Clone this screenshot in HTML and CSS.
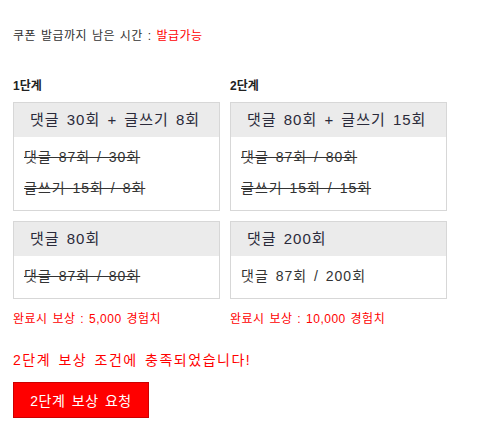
FILE: index.html
```html
<!DOCTYPE html>
<html lang="ko">
<head>
    <meta charset="UTF-8">
    <meta name="viewport" content="width=device-width, initial-scale=1.0">
    <title>쿠폰 발급</title>
    <link rel="stylesheet" href="styles.css">
</head>
<body>
    <div class="coupon">
        <p class="timer">쿠폰 발급까지 남은 시간 : <span class="red">발급가능</span></p>

        <div class="stages">
            <!-- 1단계 -->
            <div class="stage">
                <h3>1단계</h3>
                <div class="mission">
                    <div class="mission-head">댓글 30회 + 글쓰기 8회</div>
                    <div class="mission-body">
                        <p class="done">댓글 87회 / 30회</p>
                        <p class="done">글쓰기 15회 / 8회</p>
                    </div>
                </div>
                <div class="mission">
                    <div class="mission-head">댓글 80회</div>
                    <div class="mission-body">
                        <p class="done">댓글 87회 / 80회</p>
                    </div>
                </div>
                <p class="reward">완료시 보상 : 5,000 경험치</p>
            </div>

            <!-- 2단계 -->
            <div class="stage">
                <h3>2단계</h3>
                <div class="mission">
                    <div class="mission-head">댓글 80회 + 글쓰기 15회</div>
                    <div class="mission-body">
                        <p class="done">댓글 87회 / 80회</p>
                        <p class="done">글쓰기 15회 / 15회</p>
                    </div>
                </div>
                <div class="mission">
                    <div class="mission-head">댓글 200회</div>
                    <div class="mission-body">
                        <p>댓글 87회 / 200회</p>
                    </div>
                </div>
                <p class="reward">완료시 보상 : 10,000 경험치</p>
            </div>
        </div>

        <p class="notice">2단계 보상 조건에 충족되었습니다!</p>
        <button class="reward-btn">2단계 보상 요청</button>
    </div>
</body>
</html>
```

FILE: styles.css
```css
* {
    margin: 0;
    padding: 0;
    box-sizing: border-box;
}

body {
    font-family: 'Liberation Sans', 'Noto Sans CJK KR', sans-serif;
    background-color: #fff;
    color: #333;
}

.coupon {
    padding: 28px 13px 0;
}

.red {
    color: #f00;
}

.timer {
    font-size: 12px;
    line-height: 16px;
    letter-spacing: 0.5px;
    word-spacing: 1px;
}

/* 단계 칸 */
.stages {
    display: grid;
    grid-template-columns: 207px 217px;
    column-gap: 10px;
    margin-top: 34px;
}

.stage h3 {
    font-size: 12px;
    line-height: 16px;
    font-weight: bold;
    color: #222;
    margin-bottom: 8px;
}

.mission {
    border: 1px solid #d7d7d7;
}

.mission + .mission {
    margin-top: 10px;
}

.mission-head {
    background-color: #ebebeb;
    height: 34px;
    line-height: 34px;
    padding: 0 16px;
    font-size: 15px;
    letter-spacing: 1px;
    word-spacing: 2px;
    color: #2a2a3a;
    white-space: nowrap;
}

.mission-body {
    padding: 5px 10px 6px;
    font-size: 14px;
    line-height: 31px;
    letter-spacing: 1px;
    word-spacing: 2px;
    color: #333;
}

.done {
    text-decoration: line-through;
}

.reward {
    margin-top: 12px;
    font-size: 12px;
    line-height: 16px;
    letter-spacing: 0.5px;
    word-spacing: 1px;
    color: #f00;
}

.notice {
    margin-top: 23px;
    font-size: 14px;
    line-height: 20px;
    letter-spacing: 1.5px;
    word-spacing: 2px;
    color: #f00;
}

.reward-btn {
    margin-top: 12px;
    width: 136px;
    height: 36px;
    background-color: #f00;
    border: 1px solid #c00;
    color: #fff;
    font-family: inherit;
    font-size: 14px;
    letter-spacing: 0.5px;
    word-spacing: 2px;
    cursor: pointer;
}
```
